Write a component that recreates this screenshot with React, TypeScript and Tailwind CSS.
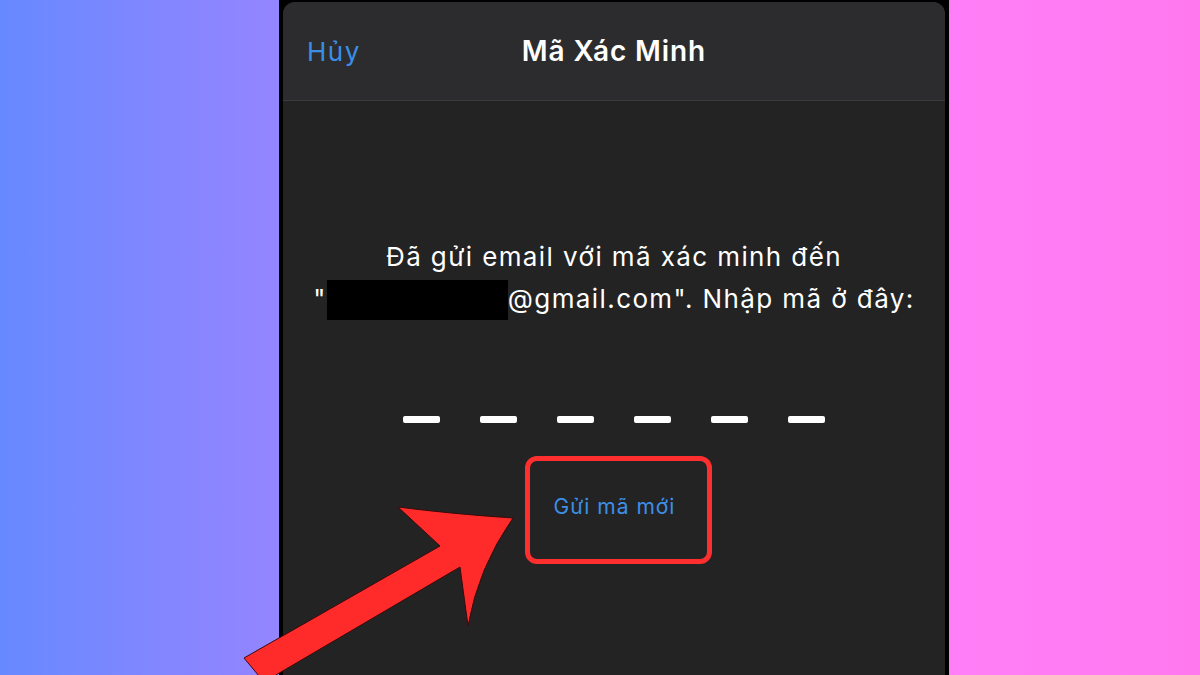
const font = { fontFamily: 'Inter, "Noto Sans", sans-serif' };

function Arrow() {
  return (
    <svg
      className="pointer-events-none absolute left-0 top-0"
      width="1200"
      height="675"
      viewBox="0 0 1200 675"
    >
      <path
        d="M244 658 L440 546 L398 507 Q452 514 513 518 Q478 568 468 626 L460 567 L264 682 Z"
        fill="#ff2b2b"
        stroke="#3a0a0a"
        strokeWidth="1"
        strokeLinejoin="round"
      />
    </svg>
  );
}

export default function App() {
  return (
    <div className="relative flex h-[675px] w-[1200px] overflow-hidden" style={font}>
      <div className="h-full w-[279px] bg-gradient-to-r from-[#6689ff] to-[#9484ff]" />

      <div className="flex h-full w-[670px] flex-col bg-black px-[4px] pt-[2px]">
        <div className="flex h-full flex-col overflow-hidden rounded-t-[12px] bg-[#232324]">
          <header className="relative flex h-[99px] items-center justify-center border-b border-[#3b3b3d] bg-[#2c2c2e]">
            <span className="absolute left-[24px] top-[37px] text-[26px] leading-none tracking-[1.5px] text-[#3a8ee6]">
              Hủy
            </span>
            <h1 className="text-[28px] font-semibold leading-none tracking-[0.9px] text-white">
              Mã Xác Minh
            </h1>
          </header>

          <div className="flex flex-col items-center pt-[135px]">
            <p className="text-center text-[26px] leading-[42px] tracking-[1.4px] text-white">
              Đã gửi email với mã xác minh đến
              <br />
              "<span className="inline-block h-[40px] w-[181px] bg-black align-[-12px]" />
              @gmail.com". Nhập mã ở đây:
            </p>

            <div className="mt-[96px] flex gap-[40px]">
              {[0, 1, 2, 3, 4, 5].map((i) => (
                <span key={i} className="block h-[7px] w-[37px] rounded-[2px] bg-white" />
              ))}
            </div>

            <div className="ml-[9px] mt-[33px] flex h-[108px] w-[187px] items-center justify-center rounded-[12px] border-[5px] border-[#ff2f2f]">
              <span className="mt-[-7px] pr-[8px] text-[21px] tracking-[1px] text-[#3d8fe6]">Gửi mã mới</span>
            </div>
          </div>
        </div>
      </div>

      <div className="h-full flex-1 bg-gradient-to-r from-[#ff7ff8] to-[#ff78ee]" />

      <Arrow />
    </div>
  );
}
